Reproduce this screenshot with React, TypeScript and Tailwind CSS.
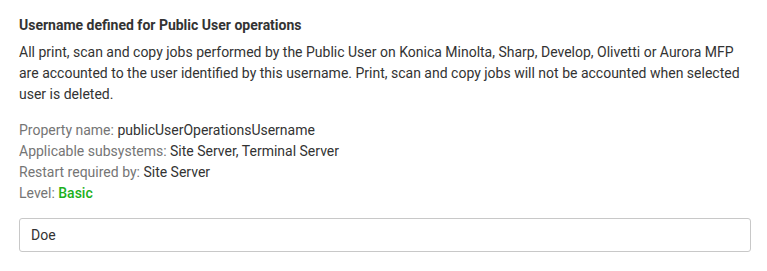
import React from 'react';

const props = [
  { label: 'Property name:', value: 'publicUserOperationsUsername' },
  { label: 'Applicable subsystems:', value: 'Site Server, Terminal Server' },
  { label: 'Restart required by:', value: 'Site Server' },
];

const App = () => {
  return (
    <div className="bg-white min-h-screen pl-[19px] pr-[16px] pt-[15px] font-['Roboto',sans-serif] text-[14px] leading-[21px] text-[#333]">
      <h2 className="font-bold text-[#333]">Username defined for Public User operations</h2>
      <p className="mt-[6px]">
        All print, scan and copy jobs performed by the Public User on Konica Minolta, Sharp, Develop, Olivetti or Aurora MFP
        are accounted to the user identified by this username. Print, scan and copy jobs will not be accounted when selected
        user is deleted.
      </p>
      <div className="mt-[15px]">
        {props.map((p) => (
          <div key={p.label}>
            <span className="text-[#757575]">{p.label}</span> <span>{p.value}</span>
          </div>
        ))}
        <div>
          <span className="text-[#757575]">Level:</span>{' '}
          <span className="text-[#1cb01c] font-medium">Basic</span>
        </div>
      </div>
      <input
        className="mt-[14px] block w-full h-[34px] rounded-[3px] border border-[#c8c8c8] px-[11px] text-[14px] text-[#333] outline-none"
        defaultValue="Doe"
      />
    </div>
  );
};

export default App;
